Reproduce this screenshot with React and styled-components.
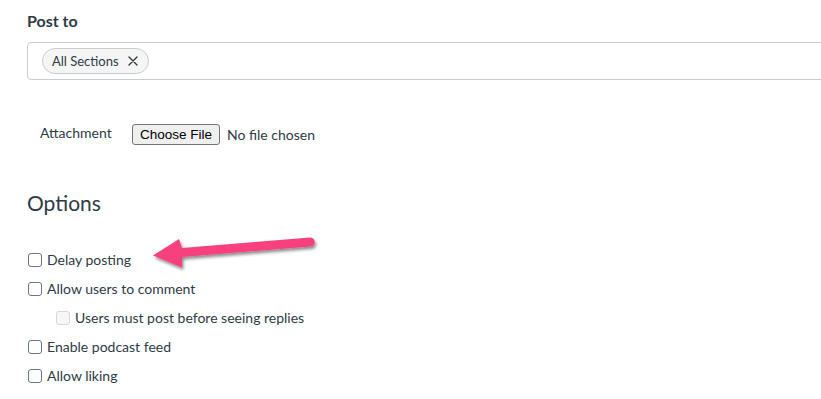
import React from "react";
import styled, { createGlobalStyle } from "styled-components";

const GlobalStyle = createGlobalStyle`
  html, body {
    margin: 0;
    padding: 0;
    background: #ffffff;
  }
  body {
    font-family: Lato, "Noto Sans", sans-serif;
    color: #2d3b45;
    overflow: hidden;
  }
`;

const Page = styled.div`
  position: relative;
  width: 821px;
  height: 399px;
  padding: 10px 0 0 27px;
  box-sizing: border-box;
  overflow: hidden;
`;

const SectionLabel = styled.div`
  font-size: 16px;
  font-weight: 700;
  line-height: 22px;
  height: 22px;
`;

const TagBox = styled.div`
  margin-top: 10px;
  width: 820px;
  height: 38px;
  box-sizing: border-box;
  border: 1px solid #c7cdd1;
  border-radius: 4px;
  display: flex;
  align-items: center;
  padding-left: 14px;
`;

const Chip = styled.span`
  display: inline-flex;
  align-items: center;
  gap: 9px;
  height: 26px;
  box-sizing: border-box;
  padding: 0 10px 0 9px;
  border: 1px solid #c7cdd1;
  border-radius: 13px;
  background: #f5f5f5;
  font-size: 13px;
  color: #2d3b45;
`;

const FileRow = styled.div`
  margin-top: 44px;
  margin-left: 13px;
  display: flex;
  align-items: center;
  height: 21px;
`;

const FieldLabel = styled.span`
  font-size: 14px;
  width: 92px;
  position: relative;
  top: -2px;
`;

const FileButton = styled.button`
  height: 21px;
  box-sizing: border-box;
  padding: 0 7px;
  border: 1px solid #767676;
  border-radius: 3px;
  background: #efefef;
  font-family: "Liberation Sans", Arial, sans-serif;
  font-size: 13.5px;
  color: #000;
  line-height: 19px;
`;

const FileStatus = styled.span`
  margin-left: 7px;
  font-size: 14px;
  color: #2d3b45;
`;

const Heading = styled.h2`
  margin: 45px 0 0;
  font-size: 21px;
  font-weight: 400;
  line-height: 26px;
  height: 26px;
`;

const OptionList = styled.div`
  margin-top: 29px;
  display: flex;
  flex-direction: column;
`;

const Option = styled.label`
  display: flex;
  align-items: center;
  height: 29px;
  padding-left: ${(p) => (p.$nested ? 29 : 1)}px;
  font-size: 14px;
  color: #2d3b45;
`;

const Box = styled.span`
  width: 12px;
  height: 12px;
  border: 1px solid ${(p) => (p.$disabled ? "#d4d8db" : "#6b7780")};
  background: ${(p) => (p.$disabled ? "#f7f7f7" : "#ffffff")};
  border-radius: 3px;
  margin-right: 5px;
  flex-shrink: 0;
`;

const Arrow = styled.svg`
  position: absolute;
  left: 140px;
  top: 225px;
  overflow: visible;
`;

const options = [
  { label: "Delay posting" },
  { label: "Allow users to comment" },
  { label: "Users must post before seeing replies", nested: true, disabled: true },
  { label: "Enable podcast feed" },
  { label: "Allow liking" },
];

export default function App() {
  return (
    <>
      <GlobalStyle />
      <Page>
        <SectionLabel>Post to</SectionLabel>
        <TagBox>
          <Chip>
            All Sections
            <svg width="10" height="10" viewBox="0 0 10 10">
              <path d="M1 1 L9 9 M9 1 L1 9" stroke="#2d3b45" strokeWidth="1.4" strokeLinecap="round" />
            </svg>
          </Chip>
        </TagBox>

        <FileRow>
          <FieldLabel>Attachment</FieldLabel>
          <FileButton>Choose File</FileButton>
          <FileStatus>No file chosen</FileStatus>
        </FileRow>

        <Heading>Options</Heading>

        <OptionList>
          {options.map((o) => (
            <Option key={o.label} $nested={o.nested}>
              <Box $disabled={o.disabled} />
              {o.label}
            </Option>
          ))}
        </OptionList>

        <Arrow width="180" height="60" viewBox="0 0 180 60">
          <defs>
            <filter id="sh" x="-20%" y="-40%" width="140%" height="180%">
              <feDropShadow dx="1.5" dy="2.5" stdDeviation="1.6" floodColor="#000" floodOpacity="0.45" />
            </filter>
          </defs>
          <g filter="url(#sh)">
            <path
              d="M170 12.5 L42 23 L39 14 L13 30.5 L42 42.5 L42 32 L170.5 21.5 A4.5 4.5 0 0 0 170 12.5 Z"
              fill="#f7417e"
            />
          </g>
        </Arrow>
      </Page>
    </>
  );
}
